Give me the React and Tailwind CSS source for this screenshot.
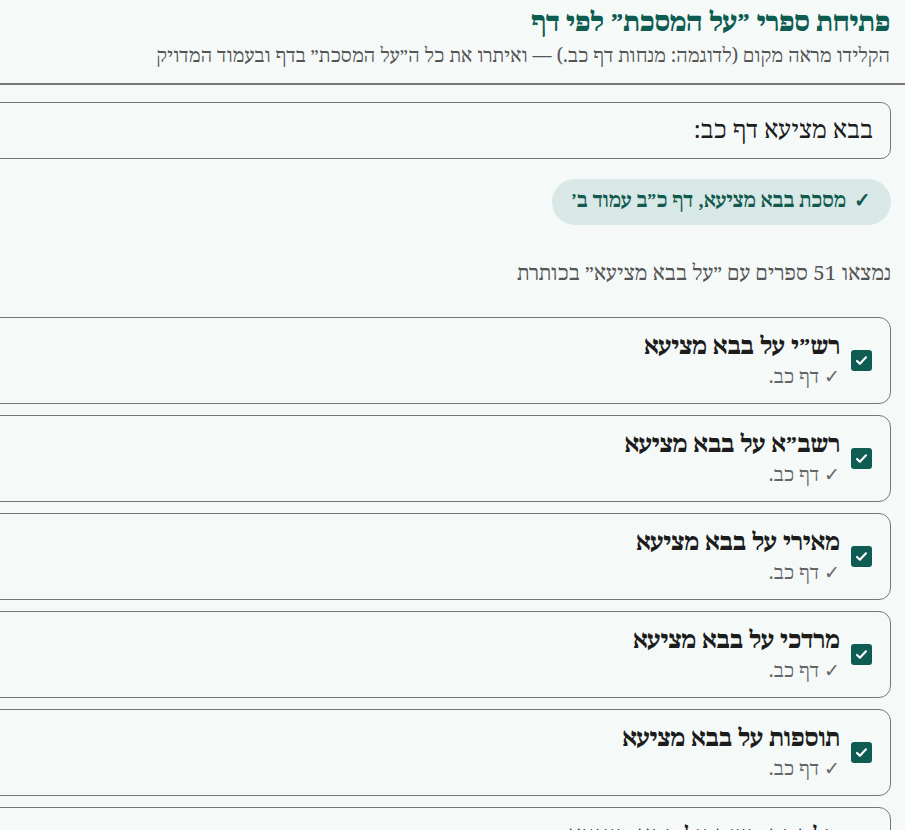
import React, { useState } from 'react';

const BOOKS = [
  'רש״י על בבא מציעא',
  'רשב״א על בבא מציעא',
  'מאירי על בבא מציעא',
  'מרדכי על בבא מציעא',
  'תוספות על בבא מציעא',
  'מלחמת משה על בבא מציעא',
];

function CheckBox({ checked, onChange }) {
  return (
    <button
      onClick={onChange}
      className={`w-[21px] h-[21px] shrink-0 rounded-[3px] flex items-center justify-center ${checked ? 'bg-[#0f5d52]' : 'bg-white border border-[#777]'}`}
    >
      {checked && (
        <svg width="13" height="13" viewBox="0 0 16 16" fill="none">
          <path d="M2.5 8.5l3.5 3.5 7.5-8" stroke="white" strokeWidth="2.6" strokeLinecap="round" strokeLinejoin="round" />
        </svg>
      )}
    </button>
  );
}

export default function App() {
  const [query, setQuery] = useState('בבא מציעא דף כב:');
  const [selected, setSelected] = useState(BOOKS.map(() => true));

  const toggle = (i) => setSelected(prev => prev.map((v, j) => (j === i ? !v : v)));

  return (
    <div dir="rtl" className="min-h-screen overflow-hidden bg-[#f5faf9] text-[#1c1c1c]" style={{ fontFamily: '"Noto Serif Hebrew", "Liberation Serif", serif' }}>
      {/* Header */}
      <div className="px-[15px] pt-[7px] pb-[14px] border-b-2 border-[#777]">
        <h1 className="text-[26px] font-black text-[#0f5d52] leading-[34px]">פתיחת ספרי ״על המסכת״ לפי דף</h1>
        <p className="text-[19px] text-[#555] leading-[24px] mt-[4px]">
          הקלידו מראה מקום (לדוגמה: מנחות דף כב.) — ואיתרו את כל ה״על המסכת״ בדף ובעמוד המדויק
        </p>
      </div>

      {/* Main */}
      <div className="mr-[14px] w-[1100px] pt-[17px]">
        <input
          value={query}
          onChange={e => setQuery(e.target.value)}
          className="block w-full h-[57px] px-[17px] text-[24px] text-[#1c1c1c] bg-[#f5faf9] border border-[#777] rounded-[10px] outline-none"
        />

        <div className="mt-[20px] flex">
          <div className="h-[46px] px-[20px] flex items-center gap-[8px] rounded-full bg-[#d8e8e6] text-[#12594f] text-[19.5px] font-bold">
            <span>✓</span>
            <span>מסכת בבא מציעא, דף כ״ב עמוד ב׳</span>
          </div>
        </div>

        <p className="mt-[37px] text-[20.5px] text-[#555] leading-[24px]">נמצאו 51 ספרים עם ״על בבא מציעא״ בכותרת</p>

        <div className="mt-[31px] flex flex-col gap-[11px]">
          {BOOKS.map((b, i) => (
            <div key={b} className="h-[87px] flex items-center gap-[11px] pr-[18px] border border-[#777] rounded-[12px] bg-[#f5faf9]">
              <CheckBox checked={selected[i]} onChange={() => toggle(i)} />
              <div className="flex flex-col">
                <span className="text-[23.5px] font-extrabold leading-[30px]">{b}</span>
                <span className="text-[19px] text-[#666] leading-[24px] mt-[4px]">✓ דף כב.</span>
              </div>
            </div>
          ))}
        </div>
      </div>
    </div>
  );
}
